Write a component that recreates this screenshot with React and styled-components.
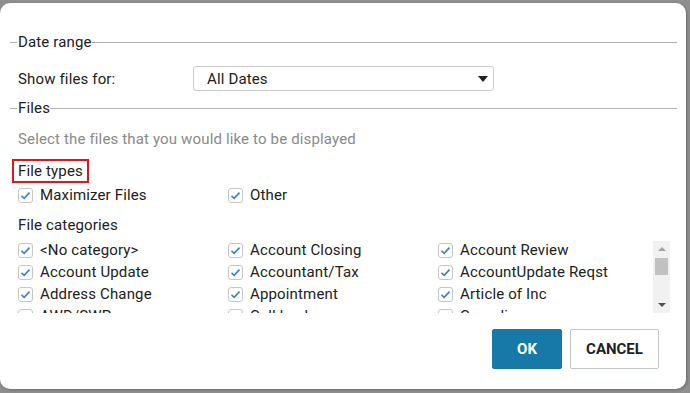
import React from "react";
import styled, { createGlobalStyle } from "styled-components";

const Global = createGlobalStyle`
  html, body { margin: 0; padding: 0; }
  body {
    background: #8f8f8f;
    font-family: Roboto, "Liberation Sans", Arial, sans-serif;
    width: 690px;
    height: 393px;
    overflow: hidden;
  }
`;

const Backdrop = styled.div`
  width: 690px;
  height: 393px;
  padding-top: 3px;
  box-sizing: border-box;
`;

const Dialog = styled.div`
  width: 686px;
  height: 386px;
  background: #fff;
  border-radius: 10px;
  box-shadow: 1px 1px 3px rgba(0, 0, 0, 0.25);
  box-sizing: border-box;
  padding: 0 9px 0 10px;
  display: flex;
  flex-direction: column;
  color: #212121;
  font-size: 15px;
  letter-spacing: 0.15px;
`;

const Legend = styled.div`
  display: flex;
  align-items: center;
  height: 16px;
  line-height: 16px;
  margin-top: ${(p) => p.$mt}px;
  &::before {
    content: "";
    width: 7px;
    height: 1px;
    background: #b3b3b3;
    margin-right: 1px;
  }
  &::after {
    content: "";
    flex: 1;
    height: 1px;
    background: #b3b3b3;
  }
`;

const FieldRow = styled.div`
  display: flex;
  align-items: center;
  margin-top: 16px;
  padding-left: 8px;
  height: 25px;
`;

const FieldLabel = styled.div`
  width: 175px;
`;

const Select = styled.div`
  width: 301px;
  height: 25px;
  box-sizing: border-box;
  border: 1px solid #cccccc;
  border-radius: 3px;
  display: flex;
  align-items: center;
  justify-content: space-between;
  padding: 0 5px 0 13px;
`;

const Caret = styled.span`
  width: 0;
  height: 0;
  border-left: 5.5px solid transparent;
  border-right: 5.5px solid transparent;
  border-top: 6px solid #222;
`;

const Note = styled.div`
  margin-top: 15px;
  padding-left: 8px;
  line-height: 16px;
  color: #8a8a8a;
`;

const Highlight = styled.div`
  margin-top: 12px;
  margin-left: 2px;
  align-self: flex-start;
  width: 77px;
  height: 24px;
  box-sizing: border-box;
  border: 2px solid #e3141c;
  padding-left: 4px;
  line-height: 20px;
  white-space: nowrap;
`;

const SubTitle = styled.div`
  margin-top: 13px;
  padding-left: 8px;
  line-height: 16px;
`;

const TypeRow = styled.div`
  display: grid;
  grid-template-columns: 210px 210px;
  padding-left: 8px;
  margin-top: 3px;
  height: 18px;
  align-items: center;
`;

const ScrollArea = styled.div`
  margin-top: 8px;
  margin-left: 8px;
  height: 72px;
  display: flex;
  width: 652px;
`;

const List = styled.div`
  flex: 1;
  overflow: hidden;
  display: grid;
  grid-template-columns: 210px 210px 1fr;
  grid-auto-rows: 18px;
  row-gap: 4px;
  align-content: start;
`;

const Item = styled.label`
  display: flex;
  align-items: center;
  gap: 7px;
  white-space: nowrap;
  height: 18px;
`;

const Box = styled.span`
  width: 15px;
  height: 15px;
  box-sizing: border-box;
  border: 1px solid #c6c6c6;
  border-radius: 3px;
  display: flex;
  align-items: center;
  justify-content: center;
  flex: none;
`;

const Track = styled.div`
  width: 17px;
  background: #f1f1f1;
  display: flex;
  flex-direction: column;
  align-items: center;
`;

const Arrow = styled.span`
  width: 0;
  height: 0;
  border-left: 4px solid transparent;
  border-right: 4px solid transparent;
  ${(p) =>
    p.$up
      ? `border-bottom: 4px solid #a3a3a3; margin-top: 6px;`
      : `border-top: 4px solid #505050; margin-top: auto; margin-bottom: 6px;`}
`;

const Thumb = styled.div`
  width: 13px;
  height: 17px;
  background: #c1c1c1;
  margin-top: 7px;
`;

const Footer = styled.div`
  margin-top: 16px;
  display: flex;
  justify-content: flex-end;
  gap: 8px;
  padding-right: 18px;
`;

const Button = styled.button`
  height: 40px;
  width: ${(p) => p.$w}px;
  box-sizing: border-box;
  font-family: Roboto, "Liberation Sans", Arial, sans-serif;
  font-size: 15px;
  font-weight: 700;
  border-radius: 2px;
  padding: 0;
  cursor: pointer;
  ${(p) =>
    p.$primary
      ? `background: #1679a7; color: #fff; border: 1px solid #1679a7;`
      : `background: #fff; color: #212121; border: 1px solid #bfc5cb;`}
`;

const Check = () => (
  <svg width="11" height="9" viewBox="0 0 11 9">
    <path d="M1.5 4.8 L4.2 7.3 L9.5 1.6" fill="none" stroke="#3f7fcf" strokeWidth="1.6" />
  </svg>
);

const CheckItem = ({ label }) => (
  <Item>
    <Box>
      <Check />
    </Box>
    {label}
  </Item>
);

const categories = [
  "<No category>", "Account Closing", "Account Review",
  "Account Update", "Accountant/Tax", "AccountUpdate Reqst",
  "Address Change", "Appointment", "Article of Inc",
  "AWD/SWP", "Call back", "Compliance",
  "Contract", "Correspondence", "Estate Planning",
];

export default function App() {
  return (
    <>
      <Global />
      <Backdrop>
        <Dialog>
          <Legend $mt={31}>Date range</Legend>
          <FieldRow>
            <FieldLabel>Show files for:</FieldLabel>
            <Select>
              All Dates
              <Caret />
            </Select>
          </FieldRow>
          <Legend $mt={9}>Files</Legend>
          <Note>Select the files that you would like to be displayed</Note>
          <Highlight>File types</Highlight>
          <TypeRow>
            <CheckItem label="Maximizer Files" />
            <CheckItem label="Other" />
          </TypeRow>
          <SubTitle>File categories</SubTitle>
          <ScrollArea>
            <List>
              {categories.map((c) => (
                <CheckItem key={c} label={c} />
              ))}
            </List>
            <Track>
              <Arrow $up />
              <Thumb />
              <Arrow />
            </Track>
          </ScrollArea>
          <Footer>
            <Button $primary $w={70}>OK</Button>
            <Button $w={89}>CANCEL</Button>
          </Footer>
        </Dialog>
      </Backdrop>
    </>
  );
}
